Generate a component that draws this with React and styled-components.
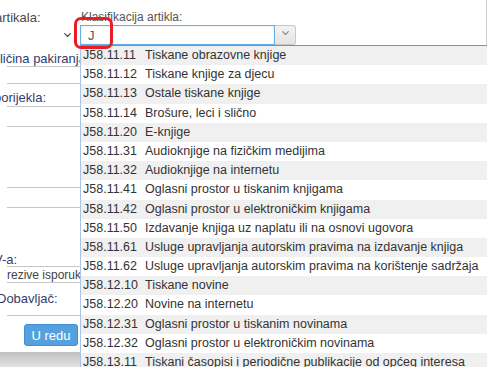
import React from "react";
import styled, { createGlobalStyle } from "styled-components";

const GlobalStyle = createGlobalStyle`
  html, body {
    margin: 0;
    padding: 0;
    background: #fff;
    overflow: hidden;
  }
  body {
    font-family: "Liberation Sans", Arial, sans-serif;
  }
`;

const Dialog = styled.div`
  position: relative;
  width: 487px;
  height: 367px;
  overflow: hidden;
  display: grid;
  grid-template-columns: 80px 1fr;
  background: #fff;
`;

const LeftPane = styled.div`
  display: flex;
  flex-direction: column;
  padding-top: 11px;
  overflow: hidden;
`;

const SideLabel = styled.div`
  margin-top: ${(p) => p.$top || 0}px;
  margin-left: ${(p) => p.$shift || 0}px;
  height: ${(p) => p.$h || 14}px;
  line-height: 14px;
  font-size: 13px;
  color: ${(p) => (p.$muted ? "#4a4a4a" : "#34406a")};
  white-space: nowrap;
`;

const SideSelect = styled.div`
  width: 76px;
  height: 20px;
  box-sizing: border-box;
  display: flex;
  align-items: center;
  justify-content: flex-end;
  padding-right: 5px;
`;

const SideField = styled.div`
  margin-top: ${(p) => p.$top || 0}px;
  margin-left: 7px;
  height: ${(p) => p.$h}px;
  box-sizing: border-box;
  border-top: 1px solid #c6c6c6;
  border-bottom: 1px solid #c6c6c6;
  display: flex;
  align-items: center;
  font-size: 12px;
  color: #444;
  white-space: nowrap;
`;

const SideRule = styled.div`
  margin-top: 9px;
  margin-left: 7px;
  border-top: 1px solid #c6c6c6;
`;

const OkButton = styled.button`
  margin: 8px 0 0 24px;
  width: 54px;
  height: 22px;
  padding: 0;
  border: 1px solid #3f8fd2;
  border-radius: 3px;
  background: #55a0de;
  color: #fff;
  font-family: inherit;
  font-size: 13px;
  cursor: pointer;
`;

const Shade = styled.div`
  margin-top: 6px;
  flex: 1;
  min-height: 14px;
  background: linear-gradient(#c0c0c0, #e2e2e2);
`;

const RightPane = styled.div`
  position: relative;
  padding-top: 10px;
  border-right: 1px solid #d2d2d2;
`;

const FieldLabel = styled.div`
  height: 15px;
  line-height: 14px;
  padding-left: 1px;
  font-size: 12px;
  color: #555;
  white-space: nowrap;
`;

const Combo = styled.div`
  position: relative;
  display: flex;
  width: 216px;
  height: 20px;
`;

const ComboInput = styled.input`
  width: 195px;
  height: 20px;
  box-sizing: border-box;
  margin: 0;
  padding: 0 7px;
  border: 1px solid #66afe9;
  outline: none;
  background: #fff;
  box-shadow: inset 0 0 2px rgba(102, 175, 233, 0.35);
  font-family: inherit;
  font-size: 13px;
  color: #555;
`;

const ComboButton = styled.div`
  width: 21px;
  height: 20px;
  box-sizing: border-box;
  border: 1px solid #c8c8c8;
  border-left: none;
  border-radius: 0 3px 3px 0;
  background: linear-gradient(#f3f3f3, #e4e4e4);
  display: flex;
  align-items: center;
  justify-content: center;
  padding-bottom: 3px;
`;

const Highlight = styled.div`
  position: absolute;
  left: -6px;
  top: -8px;
  width: 39px;
  height: 32px;
  box-sizing: border-box;
  border: 3px solid #ec1c24;
  border-radius: 7px;
  pointer-events: none;
  z-index: 3;
`;

const Dropdown = styled.ul`
  position: absolute;
  top: 100%;
  left: 0;
  width: 420px;
  margin: 0;
  padding: 0;
  list-style: none;
  background: #fff;
  border-top: 1px solid #5b9bd5;
  border-left: 1px solid #a7c6e5;
  z-index: 2;
`;

const Option = styled.li`
  height: 19.2px;
  line-height: 19.2px;
  padding-left: 2px;
  background: ${(p) => (p.$odd ? "#f0f0f0" : "#fff")};
  font-size: 12.5px;
  color: #333;
  white-space: nowrap;
`;

const Code = styled.span`
  display: inline-block;
  width: 62px;
`;

const Chevron = ({ color, size = 7 }) => (
  <svg width={size} height={size * 0.6} viewBox="0 0 10 6">
    <polyline
      points="1,1 5,5 9,1"
      fill="none"
      stroke={color}
      strokeWidth="1.6"
      strokeLinecap="round"
      strokeLinejoin="round"
    />
  </svg>
);

const options = [
  ["J58.11.11", "Tiskane obrazovne knjige"],
  ["J58.11.12", "Tiskane knjige za djecu"],
  ["J58.11.13", "Ostale tiskane knjige"],
  ["J58.11.14", "Brošure, leci i slično"],
  ["J58.11.20", "E-knjige"],
  ["J58.11.31", "Audioknjige na fizičkim medijima"],
  ["J58.11.32", "Audioknjige na internetu"],
  ["J58.11.41", "Oglasni prostor u tiskanim knjigama"],
  ["J58.11.42", "Oglasni prostor u elektroničkim knjigama"],
  ["J58.11.50", "Izdavanje knjiga uz naplatu ili na osnovi ugovora"],
  ["J58.11.61", "Usluge upravljanja autorskim pravima na izdavanje knjiga"],
  ["J58.11.62", "Usluge upravljanja autorskim pravima na korištenje sadržaja"],
  ["J58.12.10", "Tiskane novine"],
  ["J58.12.20", "Novine na internetu"],
  ["J58.12.31", "Oglasni prostor u tiskanim novinama"],
  ["J58.12.32", "Oglasni prostor u elektroničkim novinama"],
  ["J58.13.11", "Tiskani časopisi i periodične publikacije od općeg interesa"],
];

export default function App() {
  return (
    <>
      <GlobalStyle />
      <Dialog>
        <LeftPane>
          <SideLabel $muted $shift={-5}>artikala:</SideLabel>
          <SideSelect>
            <Chevron color="#444" />
          </SideSelect>
          <SideLabel $top={7} $shift={-16}>Količina pakiranja</SideLabel>
          <SideField $h={18} />
          <SideLabel $top={7} $shift={-6}>porijekla:</SideLabel>
          <SideField $top={1} $h={21} />
          <SideField $top={60} $h={21} />
          <SideLabel $top={45} $h={13} $shift={-24}>PDV-a:</SideLabel>
          <SideField $h={17}>rezive isporuke</SideField>
          <SideLabel $top={9} $shift={-3}>Dobavljač:</SideLabel>
          <SideRule />
          <OkButton>U redu</OkButton>
          <Shade />
        </LeftPane>

        <RightPane>
          <FieldLabel>Klasifikacija artikla:</FieldLabel>
          <Combo>
            <ComboInput value="J" readOnly />
            <ComboButton>
              <Chevron color="#8a8a8a" size={7} />
            </ComboButton>
            <Highlight />
            <Dropdown>
              {options.map(([code, name], i) => (
                <Option key={code} $odd={i % 2 === 0}>
                  <Code>{code}</Code>
                  {name}
                </Option>
              ))}
            </Dropdown>
          </Combo>
        </RightPane>
      </Dialog>
    </>
  );
}
